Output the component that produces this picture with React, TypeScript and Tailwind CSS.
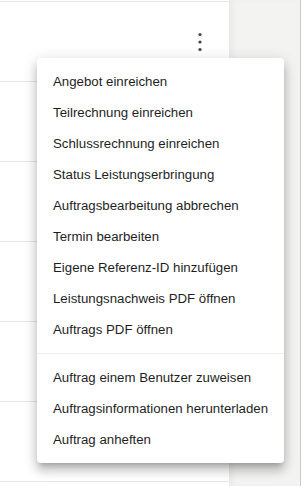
const actions = [
  'Angebot einreichen',
  'Teilrechnung einreichen',
  'Schlussrechnung einreichen',
  'Status Leistungserbringung',
  'Auftragsbearbeitung abbrechen',
  'Termin bearbeiten',
  'Eigene Referenz-ID hinzufügen',
  'Leistungsnachweis PDF öffnen',
  'Auftrags PDF öffnen',
];

const extraActions = [
  'Auftrag einem Benutzer zuweisen',
  'Auftragsinformationen herunterladen',
  'Auftrag anheften',
];

export default function App() {
  return (
    <div className="relative flex w-[301px] h-[486px] overflow-hidden bg-white font-['Liberation_Sans',Arial,sans-serif]">
      {/* Order list */}
      <div className="w-[229px] shrink-0 bg-white">
        <div className="h-[2px] border-b border-[#e6e6e6]" />
        <div className="flex h-[80px] items-center justify-end border-b border-[#e6e6e6] pr-[22px]">
          <MoreIcon />
        </div>
        {[0, 1, 2, 3, 4].map((i) => (
          <div key={i} className="h-[80px] border-b border-[#e6e6e6]" />
        ))}
      </div>

      {/* Side area */}
      <div className="flex-1 bg-[#f3f3f2] shadow-[inset_6px_0_8px_-4px_rgba(0,0,0,0.06)] border-r border-[#c9c9c9]" />

      {/* Context menu */}
      <div className="absolute left-[37px] top-[58px] w-[247px] rounded-[4px] bg-white py-[8px] shadow-[0_5px_5px_-3px_rgba(0,0,0,0.2),0_8px_10px_1px_rgba(0,0,0,0.14),0_3px_14px_2px_rgba(0,0,0,0.12)]">
        {actions.map((label) => (
          <MenuItem key={label} label={label} />
        ))}
        <div className="my-[8px] h-px bg-[#efefef]" />
        {extraActions.map((label) => (
          <MenuItem key={label} label={label} />
        ))}
      </div>
    </div>
  );
}

function MenuItem({ label }: { label: string }) {
  return (
    <div className="flex h-[31px] items-center px-[16px] text-[13.25px] text-[#1e1e1e] whitespace-nowrap">
      {label}
    </div>
  );
}

function MoreIcon() {
  return (
    <svg width="14" height="24" viewBox="0 0 14 24" className="text-[#444]">
      <circle cx="7" cy="4.5" r="1.6" fill="currentColor" />
      <circle cx="7" cy="12" r="1.6" fill="currentColor" />
      <circle cx="7" cy="19.5" r="1.6" fill="currentColor" />
    </svg>
  );
}
